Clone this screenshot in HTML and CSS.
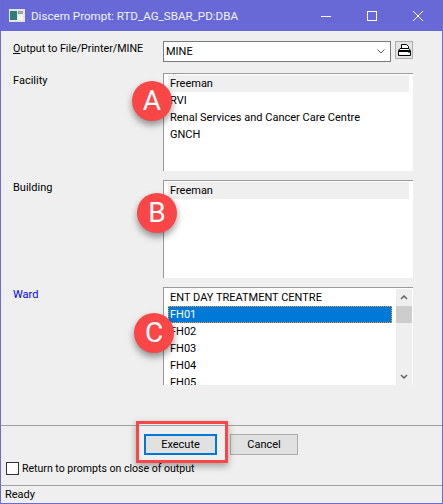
FILE: index.html
```html
<!DOCTYPE html>
<html lang="en">

<head>
    <meta charset="UTF-8">
    <meta name="viewport" content="width=device-width, initial-scale=1.0">
    <title>Discern Prompt</title>
    <link rel="stylesheet" href="styles.css">
</head>

<body>
    <div class="window">
        <div class="titlebar">
            <svg class="app-icon" width="16" height="13" viewBox="0 0 16 13">
                <rect x="0" y="0" width="16" height="13" fill="#e4e6e2" />
                <rect x="1" y="2" width="7" height="9" fill="#2f7f76" />
                <rect x="9" y="2" width="5" height="3" fill="#9aa5a5" />
                <rect x="9" y="6" width="5" height="5" fill="#f4f6f2" />
            </svg>
            <span class="title">Discern Prompt: RTD_AG_SBAR_PD:DBA</span>
            <div class="window-controls">
                <svg width="12" height="12" viewBox="0 0 12 12">
                    <path d="M1 6.5H11" stroke="#fff" fill="none" />
                </svg>
                <svg width="12" height="12" viewBox="0 0 12 12">
                    <rect x="1.5" y="1.5" width="9" height="9" stroke="#fff" fill="none" />
                </svg>
                <svg width="12" height="12" viewBox="0 0 12 12">
                    <path d="M1 1L11 11M11 1L1 11" stroke="#fff" fill="none" />
                </svg>
            </div>
        </div>

        <div class="prompts">
            <div class="prompt-row output-row">
                <label class="prompt-label output-label"><u>O</u>utput to File/Printer/MINE</label>
                <div class="combo">
                    <span>MINE</span>
                    <svg width="8" height="5" viewBox="0 0 8 5">
                        <path d="M0.5 0.5L4 4L7.5 0.5" stroke="#555" fill="none" />
                    </svg>
                </div>
                <div class="print-button">
                    <svg width="13" height="12" viewBox="0 0 13 12">
                        <path d="M3.5 4V0.5H8.5L10.5 2.5V4" stroke="#000" fill="#fff" />
                        <path d="M2 4.5H11L12.5 6.5V11.5H0.5V6.5Z" stroke="#000" fill="#fff" />
                        <rect x="1" y="6" width="11" height="2" fill="#000" />
                        <rect x="10" y="8" width="2" height="1" fill="#1fa83c" />
                    </svg>
                </div>
            </div>

            <div class="prompt-row">
                <label class="prompt-label">Facility</label>
                <div class="listbox">
                    <div class="list-item current">Freeman</div>
                    <div class="list-item">RVI</div>
                    <div class="list-item">Renal Services and Cancer Care Centre</div>
                    <div class="list-item">GNCH</div>
                </div>
            </div>

            <div class="prompt-row">
                <label class="prompt-label">Building</label>
                <div class="listbox">
                    <div class="list-item current">Freeman</div>
                </div>
            </div>

            <div class="prompt-row">
                <label class="prompt-label required">Ward</label>
                <div class="listbox with-scroll">
                    <div class="list-items">
                        <div class="list-item">ENT DAY TREATMENT CENTRE</div>
                        <div class="list-item selected">FH01</div>
                        <div class="list-item">FH02</div>
                        <div class="list-item">FH03</div>
                        <div class="list-item">FH04</div>
                        <div class="list-item">FH05</div>
                    </div>
                    <div class="scrollbar">
                        <svg width="8" height="6" viewBox="0 0 8 6">
                            <path d="M1 4.5L4 1.5L7 4.5" stroke="#606060" stroke-width="1.5" fill="none" />
                        </svg>
                        <div class="scroll-thumb"></div>
                        <svg class="scroll-down" width="8" height="6" viewBox="0 0 8 6">
                            <path d="M1 1.5L4 4.5L7 1.5" stroke="#606060" stroke-width="1.5" fill="none" />
                        </svg>
                    </div>
                </div>
            </div>
        </div>

        <div class="actions">
            <div class="buttons">
                <div class="button primary">Execute</div>
                <div class="button">Cancel</div>
            </div>
            <div class="return-option">
                <span class="checkbox"></span>
                <span class="return-text">Return to prompts on close of output</span>
            </div>
        </div>

        <div class="statusbar">Ready</div>

        <!-- annotations drawn over the dialog -->
        <div class="marker marker-a">A</div>
        <div class="marker marker-b">B</div>
        <div class="marker marker-c">C</div>
        <div class="highlight-box"></div>
    </div>
</body>

</html>
```

FILE: styles.css
```css
html,
body {
    margin: 0;
    padding: 0;
}

body {
    font-family: Roboto, "Liberation Sans", sans-serif;
    font-size: 11px;
    color: #000;
    background-color: #efefef;
}

.window {
    position: relative;
    box-sizing: border-box;
    width: 443px;
    height: 504px;
    display: flex;
    flex-direction: column;
    background-color: #efefef;
    border: 1px solid #6a6ad8;
    border-top: 0;
    overflow: hidden;
}

.titlebar {
    height: 31px;
    flex-shrink: 0;
    display: flex;
    align-items: center;
    padding-left: 8px;
    background-color: #6869d6;
    color: #fff;
    font-size: 11.6px;
}

.app-icon {
    margin-right: 6px;
}

.title {
    flex: 1;
    color: #f2f2ff;
}

.window-controls {
    display: flex;
    gap: 34px;
    padding-right: 18px;
}

.prompts {
    flex: 1;
    display: flex;
    flex-direction: column;
    gap: 9px;
    padding-top: 10px;
}

.prompt-row {
    display: grid;
    grid-template-columns: 162px 250px;
}

.output-row {
    gap: 0 4px;
    grid-template-columns: 158px 228px 18px;
    margin-bottom: 2px;
}

.prompt-label {
    padding-left: 12px;
    padding-top: 1px;
    line-height: 13px;
}

.output-label {
    font-size: 10.7px;
}

.required {
    color: #0000ff;
}

.combo {
    box-sizing: border-box;
    height: 21px;
    display: flex;
    align-items: center;
    justify-content: space-between;
    padding: 0 5px 0 2px;
    background-color: #fff;
    border: 1px solid #7a7a7a;
}

.print-button {
    box-sizing: border-box;
    width: 18px;
    height: 18px;
    display: flex;
    align-items: center;
    justify-content: center;
    background-color: #e4e4e4;
    border: 1px solid #adadad;
}

.listbox {
    box-sizing: border-box;
    height: 98px;
    padding: 1px 4px 0 4px;
    background-color: #fff;
    border-top: 1px solid #9a9a9a;
    border-left: 1px solid #9a9a9a;
    overflow: hidden;
}

.list-item {
    box-sizing: border-box;
    height: 17px;
    line-height: 17px;
    padding-left: 2px;
    white-space: nowrap;
}

.current {
    background-color: #efefef;
}

.selected {
    background-color: #0078d7;
    color: #fff;
    outline: 1px dotted #f09a3a;
    outline-offset: -1px;
}

.with-scroll {
    display: flex;
    padding-right: 1px;
}

.list-items {
    flex: 1;
    margin-right: 4px;
}

.scrollbar {
    width: 16px;
    display: flex;
    flex-direction: column;
    align-items: center;
    background-color: #efefef;
    height: 96px;
}

.scrollbar svg {
    height: 17px;
}

.scroll-thumb {
    width: 100%;
    height: 17px;
    background-color: #cdcdcd;
}

.scroll-down {
    margin-top: auto;
}

.actions {
    box-sizing: border-box;
    height: 60px;
    border-top: 1px solid #a0a0a0;
    flex-shrink: 0;
}

.buttons {
    display: flex;
    gap: 13px;
    padding: 8px 0 0 143px;
}

.button {
    box-sizing: border-box;
    width: 68px;
    height: 21px;
    line-height: 19px;
    text-align: center;
    background-color: #e1e1e1;
    border: 1px solid #adadad;
}

.primary {
    width: 73px;
    line-height: 17px;
    border: 2px solid #0078d7;
}

.return-option {
    display: flex;
    align-items: center;
    gap: 3px;
    padding: 7px 0 0 5px;
}

.return-text {
    font-size: 10.55px;
}

.checkbox {
    box-sizing: border-box;
    width: 13px;
    height: 13px;
    background-color: #fff;
    border: 1px solid #333;
}

.statusbar {
    box-sizing: border-box;
    height: 18px;
    flex-shrink: 0;
    padding-left: 4px;
    line-height: 18px;
    border-top: 1px solid #a0a0a0;
}

.marker {
    position: absolute;
    width: 40px;
    height: 40px;
    border-radius: 50%;
    background-color: #f94646;
    box-shadow: 0 4px 7px rgba(0, 0, 0, 0.4);
    color: #fff;
    font-family: Roboto, sans-serif;
    font-size: 28px;
    line-height: 40px;
    text-align: center;
}

.marker-a {
    left: 131px;
    top: 81px;
}

.marker-b {
    left: 136px;
    top: 193px;
}

.marker-c {
    left: 133px;
    top: 313px;
}

.highlight-box {
    position: absolute;
    left: 135px;
    top: 421px;
    width: 92px;
    height: 42px;
    box-sizing: border-box;
    border: 3px solid #f94646;
    box-shadow: 0 3px 7px rgba(0, 0, 0, 0.35);
}
```
